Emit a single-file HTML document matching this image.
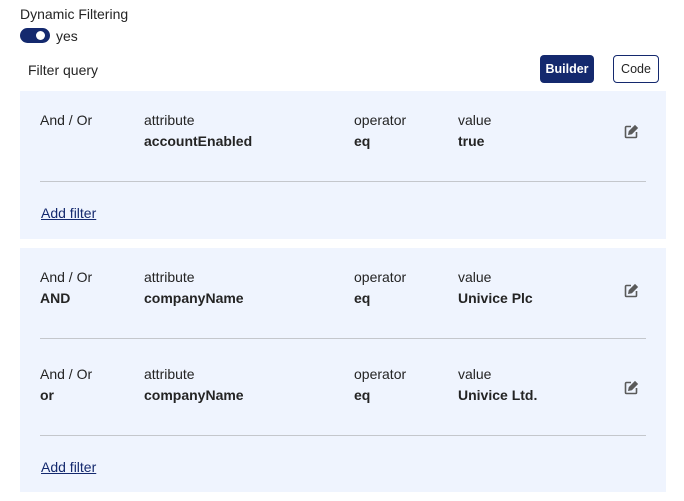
<!DOCTYPE html>
<html><head><style>
body{margin:0;width:684px;height:501px;background:#fff;font-family:"Liberation Sans",sans-serif;font-size:14px;color:#242424;position:relative;overflow:hidden}
.a{position:absolute;white-space:nowrap}
.b{font-weight:bold}
.panel{position:absolute;left:20px;width:646px;background:#eff4fe}
.hr{position:absolute;left:40px;width:606px;height:1px;background:#c4c7cc}
.link{color:#14296e;text-decoration:underline}
</style></head><body>
<div class="a" style="left:20px;top:6px">Dynamic Filtering</div>
<div class="a" style="left:20px;top:28px;width:30px;height:15px;border-radius:8px;background:#14296e"></div>
<div class="a" style="left:36px;top:31px;width:9px;height:9px;border-radius:50%;background:#fff"></div>
<div class="a" style="left:56px;top:28px">yes</div>
<div class="a" style="left:28px;top:62px">Filter query</div>
<div class="a" style="left:540px;top:55px;width:54px;height:28px;border-radius:4px;background:#14296e;color:#fff;font-weight:bold;font-size:12.5px;line-height:28px;text-align:center">Builder</div>
<div class="a" style="left:613px;top:55px;width:44px;height:26px;border:1px solid #14296e;border-radius:4px;color:#242424;font-size:12.5px;line-height:26px;text-align:center">Code</div>

<div class="panel" style="top:91px;height:148px"></div>
<div class="panel" style="top:248px;height:244px"></div>

<svg class="a" style="left:0;top:0" width="684" height="501">
<g fill="none" stroke="#5a5a5a" stroke-width="1.6">
<g transform="translate(624,125)"><path d="M7 1.5H2.5a1 1 0 0 0-1 1v9a1 1 0 0 0 1 1h9a1 1 0 0 0 1-1V7"/><path d="M5 9l.5-2.5L11 1l2 2-5.5 5.5z" fill="#5a5a5a"/></g>
<g transform="translate(624,284)"><path d="M7 1.5H2.5a1 1 0 0 0-1 1v9a1 1 0 0 0 1 1h9a1 1 0 0 0 1-1V7"/><path d="M5 9l.5-2.5L11 1l2 2-5.5 5.5z" fill="#5a5a5a"/></g>
<g transform="translate(624,381)"><path d="M7 1.5H2.5a1 1 0 0 0-1 1v9a1 1 0 0 0 1 1h9a1 1 0 0 0 1-1V7"/><path d="M5 9l.5-2.5L11 1l2 2-5.5 5.5z" fill="#5a5a5a"/></g>
</g></svg>

<div class="a" style="left:40px;top:112px">And / Or</div>
<div class="a" style="left:144px;top:112px">attribute</div>
<div class="a b" style="left:144px;top:133px">accountEnabled</div>
<div class="a" style="left:354px;top:112px">operator</div>
<div class="a b" style="left:354px;top:133px">eq</div>
<div class="a" style="left:458px;top:112px">value</div>
<div class="a b" style="left:458px;top:133px">true</div>
<div class="hr" style="top:181px"></div>
<div class="a link" style="left:41px;top:205px">Add filter</div>

<div class="a" style="left:40px;top:269px">And / Or</div>
<div class="a b" style="left:40px;top:290px">AND</div>
<div class="a" style="left:144px;top:269px">attribute</div>
<div class="a b" style="left:144px;top:290px">companyName</div>
<div class="a" style="left:354px;top:269px">operator</div>
<div class="a b" style="left:354px;top:290px">eq</div>
<div class="a" style="left:458px;top:269px">value</div>
<div class="a b" style="left:458px;top:290px">Univice Plc</div>
<div class="hr" style="top:338px"></div>

<div class="a" style="left:40px;top:366px">And / Or</div>
<div class="a b" style="left:40px;top:387px">or</div>
<div class="a" style="left:144px;top:366px">attribute</div>
<div class="a b" style="left:144px;top:387px">companyName</div>
<div class="a" style="left:354px;top:366px">operator</div>
<div class="a b" style="left:354px;top:387px">eq</div>
<div class="a" style="left:458px;top:366px">value</div>
<div class="a b" style="left:458px;top:387px">Univice Ltd.</div>
<div class="hr" style="top:435px"></div>
<div class="a link" style="left:41px;top:459px">Add filter</div>
</body></html>
